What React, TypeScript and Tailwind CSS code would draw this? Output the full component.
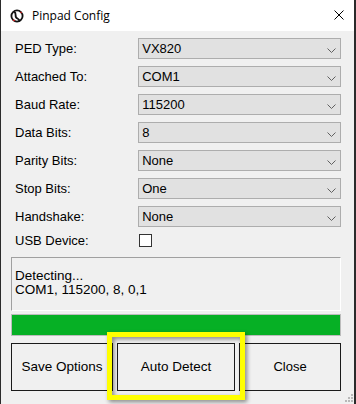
import React from "react";

const Chevron = () => (
  <svg width="9" height="5" viewBox="0 0 9 5" className="absolute right-[4px] top-[9px]">
    <path d="M0.5 0.5 L4.5 4.5 L8.5 0.5" fill="none" stroke="#606060" strokeWidth="1" />
  </svg>
);

const Select = ({ value }: { value: string }) => (
  <div className="relative w-[204px] h-[21px] bg-[#e1e1e1] border border-[#adadad] flex items-center pl-[3px] text-black">
    <span>{value}</span>
    <Chevron />
  </div>
);

const rows: [string, string][] = [
  ["PED Type:", "VX820"],
  ["Attached To:", "COM1"],
  ["Baud Rate:", "115200"],
  ["Data Bits:", "8"],
  ["Parity Bits:", "None"],
  ["Stop Bits:", "One"],
  ["Handshake:", "None"],
];

export default function App() {
  return (
    <div
      className="relative w-[356px] h-[404px] bg-[#f0f0f0] border-l border-r-2 border-[#2b2b2b] overflow-hidden text-[13px]"
      style={{ fontFamily: '"Liberation Sans", Arial, sans-serif' }}
    >
      {/* Title bar */}
      <div className="h-[31px] bg-white flex items-center relative">
        <svg width="14" height="14" viewBox="0 0 14 14" className="ml-[9px]">
          <circle cx="7" cy="7" r="5.6" fill="none" stroke="#111" strokeWidth="1.8" />
          <path d="M4.2 2.6 C7.5 4.5 3.5 8 7.5 9.5 C9 10.2 9.5 11.5 9.6 12.4" fill="none" stroke="#111" strokeWidth="1.8" />
          <path d="M3.2 10.8 L4.6 12" stroke="#d22" strokeWidth="1.4" />
          <path d="M10.5 2.8 L11.6 4" stroke="#d22" strokeWidth="1.2" />
        </svg>
        <span
          className="ml-[8px] text-[12px] text-black"
          style={{ fontFamily: '"Open Sans", "Noto Sans", sans-serif' }}
        >
          Pinpad Config
        </span>
        <svg width="10" height="10" viewBox="0 0 10 10" className="absolute left-[333px] top-[10px]">
          <path d="M0.5 0.5 L9.5 9.5 M9.5 0.5 L0.5 9.5" stroke="#000" strokeWidth="1" />
        </svg>
      </div>

      {/* Body */}
      <div className="pl-[10px] w-[340px]">
        <div className="pt-[7px] flex flex-col gap-[7px]">
          {rows.map(([label, value]) => (
            <div key={label} className="flex items-center h-[21px]">
              <div className="w-[128px] pl-[4px] text-black">{label}</div>
              <Select value={value} />
            </div>
          ))}
          <div className="flex items-center h-[13px]">
            <div className="w-[128px] pl-[4px] text-black">USB Device:</div>
            <div className="w-[13px] h-[13px] bg-white border border-[#333]" />
          </div>
        </div>

        {/* Status box */}
        <div className="mt-[10px] w-[330px] h-[54px] border border-t-[#a0a0a0] border-l-[#a0a0a0] border-r-white border-b-white pl-[3px] pt-[11px] leading-[14px] text-[13.5px] text-black">
          <div>Detecting...</div>
          <div>COM1, 115200, 8, 0,1</div>
        </div>

        {/* Progress */}
        <div className="mt-[3px] w-[330px] h-[22px] border border-[#bcbcbc] bg-[#e6e6e6]">
          <div className="h-full w-full bg-[#06b025]" />
        </div>

        {/* Buttons */}
        <div className="mt-[7px] flex gap-[4px] w-[330px] h-[48px]">
          <button className="w-[102px] h-full border border-[#1a1a1a] bg-[#f0f0f0] text-black text-[13.5px]">Save Options</button>
          <button className="w-[118px] h-full border border-[#1a1a1a] bg-[#f0f0f0] text-black text-[13.5px]">Auto Detect</button>
          <button className="w-[102px] h-full border border-[#1a1a1a] bg-[#f0f0f0] text-black text-[13px]">Close</button>
        </div>
      </div>

      {/* Resize grip */}
      <svg width="9" height="9" viewBox="0 0 9 9" className="absolute left-[344px] top-[394px]">
        <rect x="6" y="0" width="2" height="2" fill="#b8b8b8" />
        <rect x="3" y="3" width="2" height="2" fill="#b8b8b8" />
        <rect x="6" y="3" width="2" height="2" fill="#b8b8b8" />
        <rect x="0" y="6" width="2" height="2" fill="#b8b8b8" />
        <rect x="3" y="6" width="2" height="2" fill="#b8b8b8" />
        <rect x="6" y="6" width="2" height="2" fill="#b8b8b8" />
      </svg>

      {/* Yellow annotation */}
      <div className="absolute left-[106px] top-[332px] w-[138px] h-[68px] border-[5px] border-[#ffff00] drop-shadow-[2px_2px_2px_rgba(0,0,0,0.45)]" />
    </div>
  );
}
